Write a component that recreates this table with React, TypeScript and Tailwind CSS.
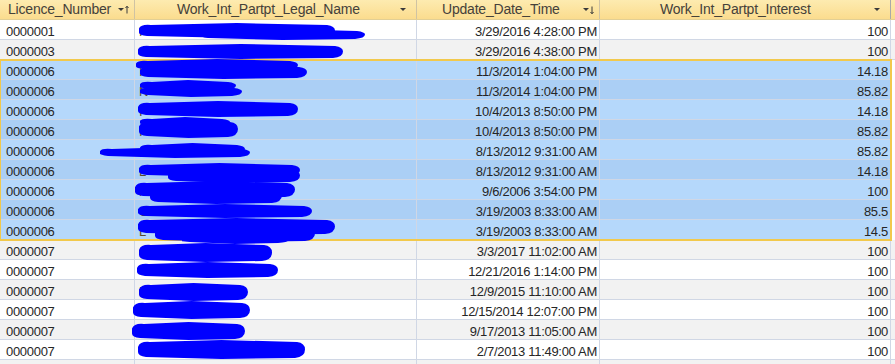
import React from "react";

type Row = { lic: string; peek: string; date: string; pct: string };

const rows: Row[] = [
  { lic: "0000001", peek: "P", date: "3/29/2016 4:28:00 PM", pct: "100" },
  { lic: "0000003", peek: "", date: "3/29/2016 4:38:00 PM", pct: "100" },
  { lic: "0000006", peek: "I", date: "11/3/2014 1:04:00 PM", pct: "14.18" },
  { lic: "0000006", peek: "N", date: "11/3/2014 1:04:00 PM", pct: "85.82" },
  { lic: "0000006", peek: "I", date: "10/4/2013 8:50:00 PM", pct: "14.18" },
  { lic: "0000006", peek: "I", date: "10/4/2013 8:50:00 PM", pct: "85.82" },
  { lic: "0000006", peek: "", date: "8/13/2012 9:31:00 AM", pct: "85.82" },
  { lic: "0000006", peek: "L", date: "8/13/2012 9:31:00 AM", pct: "14.18" },
  { lic: "0000006", peek: "M", date: "9/6/2006 3:54:00 PM", pct: "100" },
  { lic: "0000006", peek: "C", date: "3/19/2003 8:33:00 AM", pct: "85.5" },
  { lic: "0000006", peek: "L", date: "3/19/2003 8:33:00 AM", pct: "14.5" },
  { lic: "0000007", peek: "C", date: "3/3/2017 11:02:00 AM", pct: "100" },
  { lic: "0000007", peek: "", date: "12/21/2016 1:14:00 PM", pct: "100" },
  { lic: "0000007", peek: "F", date: "12/9/2015 11:10:00 AM", pct: "100" },
  { lic: "0000007", peek: "", date: "12/15/2014 12:07:00 PM", pct: "100" },
  { lic: "0000007", peek: "", date: "9/17/2013 11:05:00 AM", pct: "100" },
  { lic: "0000007", peek: "", date: "2/7/2013 11:49:00 AM", pct: "100" },
  { lic: "", peek: "", date: "", pct: "" },
];

// redaction strokes drawn over the name column: [x1, x2, top, bottom]
const strokes: [number, number, number, number][] = [
  [139, 335, 24, 37], [200, 365, 30, 39],
  [138, 343, 45, 58], [136, 298, 60, 70], [140, 307, 66, 78],
  [140, 236, 81, 90], [140, 242, 87, 96],
  [138, 298, 102, 116],
  [140, 230, 118, 126], [139, 238, 121, 137],
  [100, 250, 148, 157], [140, 245, 144, 154],
  [139, 300, 164, 176], [168, 300, 169, 182],
  [135, 295, 182, 197], [150, 282, 187, 203],
  [138, 312, 205, 217],
  [138, 335, 219, 234], [155, 315, 226, 241], [182, 288, 238, 243],
  [139, 272, 244, 261],
  [137, 278, 263, 277],
  [139, 248, 284, 300],
  [133, 250, 302, 318],
  [132, 245, 323, 339],
  [138, 305, 341, 358],
];

function strokePath([x1, x2, t, b]: [number, number, number, number]) {
  const m = (x1 + x2) / 2;
  const h = b - t;
  return `M${x1} ${t + h * 0.35} Q${x1 + 2} ${t} ${x1 + 12} ${t + 1} L${m} ${t - 1} L${x2 - 8} ${t + 1} Q${x2} ${t + 2} ${x2} ${t + h / 2} Q${x2} ${b - 1} ${x2 - 10} ${b} L${m} ${b + 1} L${x1 + 8} ${b - 1} Q${x1} ${b - 2} ${x1} ${t + h * 0.65} Z`;
}

function HeadIcon({ sort }: { sort?: "up" | "down" }) {
  return (
    <svg width="12" height="10" viewBox="0 0 12 10" className="absolute right-[5px] top-[5px]">
      <polygon points="1,3 7,3 4,6" fill="#3a3a3a" />
      {sort && <line x1="10" y1="1.5" x2="10" y2="8.5" stroke="#3a3a3a" strokeWidth="1" />}
      {sort === "up" && <polyline points="8.5,3 10,1.2 11.5,3" fill="none" stroke="#3a3a3a" strokeWidth="1" />}
      {sort === "down" && <polyline points="8.5,7 10,8.8 11.5,7" fill="none" stroke="#3a3a3a" strokeWidth="1" />}
    </svg>
  );
}

function DataRow({ row, idx }: { row: Row; idx: number }) {
  const sel = idx >= 2 && idx <= 10;
  const bg = sel
    ? idx % 2 === 0 ? "bg-[#b5d8fb]" : "bg-[#abcff5]"
    : idx % 2 === 0 ? "bg-white" : "bg-[#f2f2f2]";
  return (
    <div className={`flex h-[20px] border-b border-[#d0d7e5] ${bg}`}>
      <div className="w-[135px] shrink-0 border-r border-[#d0d7e5] pl-[6px] pt-[4px] leading-[15px]">{row.lic}</div>
      <div className="w-[282px] shrink-0 border-r border-[#d0d7e5] pl-[4px] pt-[4px] leading-[15px] text-[#5a4a2a]">{row.peek}</div>
      <div className="w-[183px] shrink-0 border-r border-[#d0d7e5] pr-[2px] pt-[4px] leading-[15px] text-right">{row.date}</div>
      <div className="w-[291px] shrink-0 border-r border-[#d0d7e5] pr-[2px] pt-[4px] leading-[15px] text-right">{row.pct}</div>
    </div>
  );
}

export default function App() {
  return (
    <div className="relative w-[895px] h-[364px] overflow-hidden bg-white font-['Liberation_Sans',Arial,sans-serif] text-[13px] tracking-[-0.3px] text-[#262626]">
      {/* header */}
      <div className="flex h-[20px] border-b border-[#e2cf95] bg-[linear-gradient(#fdebb0,#fbdc8e)] text-[14px] tracking-[-0.2px] text-[#45413a] leading-[19px]">
        <div className="relative w-[135px] shrink-0 border-r border-[#cfc3a3] pl-[8px]">
          Licence_Number
          <HeadIcon sort="up" />
        </div>
        <div className="relative w-[282px] shrink-0 border-r border-[#cfc3a3] pl-[42px]">
          Work_Int_Partpt_Legal_Name
          <HeadIcon />
        </div>
        <div className="relative w-[183px] shrink-0 border-r border-[#cfc3a3] pl-[25px]">
          Update_Date_Time
          <HeadIcon sort="down" />
        </div>
        <div className="relative w-[291px] shrink-0 border-r border-[#a9a9a9] pl-[60px]">
          Work_Int_Partpt_Interest
          <HeadIcon />
        </div>
      </div>

      {rows.slice(0, 2).map((r, i) => (
        <DataRow key={i} row={r} idx={i} />
      ))}
      <div className="w-[891px] outline-2 outline-[#f2c94c] -outline-offset-1">
        {rows.slice(2, 11).map((r, i) => (
          <DataRow key={i + 2} row={r} idx={i + 2} />
        ))}
      </div>
      {rows.slice(11).map((r, i) => (
        <DataRow key={i + 11} row={r} idx={i + 11} />
      ))}

      {/* redaction marks over the names */}
      <svg className="pointer-events-none absolute left-0 top-0" width="895" height="364">
        {strokes.map((s, i) => (
          <path key={i} d={strokePath(s)} fill="#0000ff" />
        ))}
      </svg>
    </div>
  );
}
